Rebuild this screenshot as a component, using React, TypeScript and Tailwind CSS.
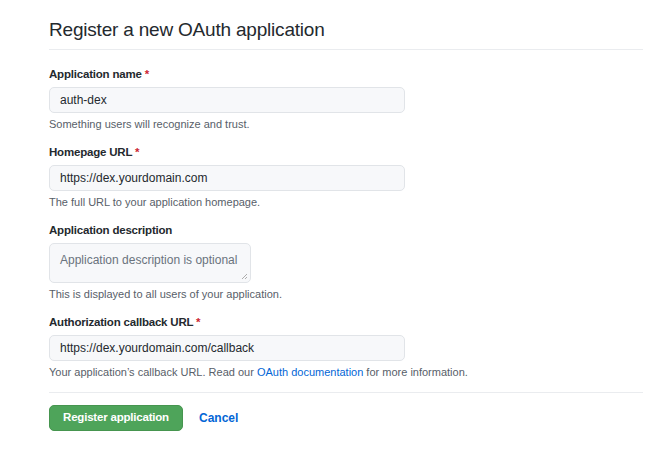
import React from "react";

const font = { fontFamily: "'Liberation Sans', Arial, sans-serif" };

function Label({ text, required }: { text: string; required?: boolean }) {
  return (
    <div className="text-[11.5px] tracking-[-0.2px] font-bold text-[#24292e] leading-[16px]">
      {text}
      {required && <span className="text-[#cb2431]"> *</span>}
    </div>
  );
}

function Input({ value }: { value: string }) {
  return (
    <div className="w-[356px] h-[26px] mt-[5px] rounded-[5px] border border-[#e1e4e8] bg-[#f7f8fa] px-[10px] flex items-center text-[12px] text-[#24292e]">
      {value}
    </div>
  );
}

function Help({ children }: { children: React.ReactNode }) {
  return <div className="mt-[4px] text-[11px] leading-[14px] text-[#586069]">{children}</div>;
}

export default function App() {
  return (
    <div className="w-[650px] h-[449px] bg-white overflow-hidden" style={font}>
      <div className="pl-[49px] pr-[7px] pt-[16px]">
        <h1 className="text-[19px] tracking-[-0.2px] leading-[27px] font-normal text-[#24292e] pb-[6px] border-b border-[#eaecef]">
          Register a new OAuth application
        </h1>
        <div className="mt-[16px]">
          <Label text="Application name" required />
          <Input value="auth-dex" />
          <Help>Something users will recognize and trust.</Help>
        </div>
        <div className="mt-[13px]">
          <Label text="Homepage URL" required />
          <Input value="https://dex.yourdomain.com" />
          <Help>The full URL to your application homepage.</Help>
        </div>
        <div className="mt-[13px]">
          <Label text="Application description" />
          <div className="relative w-[202px] h-[40px] mt-[5px] rounded-[5px] border border-[#e1e4e8] bg-[#f7f8fa] px-[10px] pt-[7px] text-[12px] text-[#6a737d] whitespace-nowrap">
            Application description is optional
            <svg className="absolute right-[2px] bottom-[2px]" width="7" height="7" viewBox="0 0 7 7">
              <path d="M6 1 L1 6 M6 4 L4 6" stroke="#999" strokeWidth="0.8" />
            </svg>
          </div>
          <Help>This is displayed to all users of your application.</Help>
        </div>
        <div className="mt-[13px]">
          <Label text="Authorization callback URL" required />
          <Input value="https://dex.yourdomain.com/callback" />
          <Help>
            Your application’s callback URL. Read our{" "}
            <span className="text-[#0366d6]">OAuth documentation</span> for more information.
          </Help>
        </div>
        <div className="mt-[13px] border-t border-[#eaecef] pt-[12px] flex items-center">
          <div className="w-[134px] h-[26px] rounded-[5px] bg-[#4ea45a] border border-[#46954f] text-white text-[11.5px] tracking-[-0.2px] font-bold flex items-center justify-center">
            Register application
          </div>
          <div className="ml-[16px] text-[12px] font-bold text-[#0366d6]">Cancel</div>
        </div>
      </div>
    </div>
  );
}
